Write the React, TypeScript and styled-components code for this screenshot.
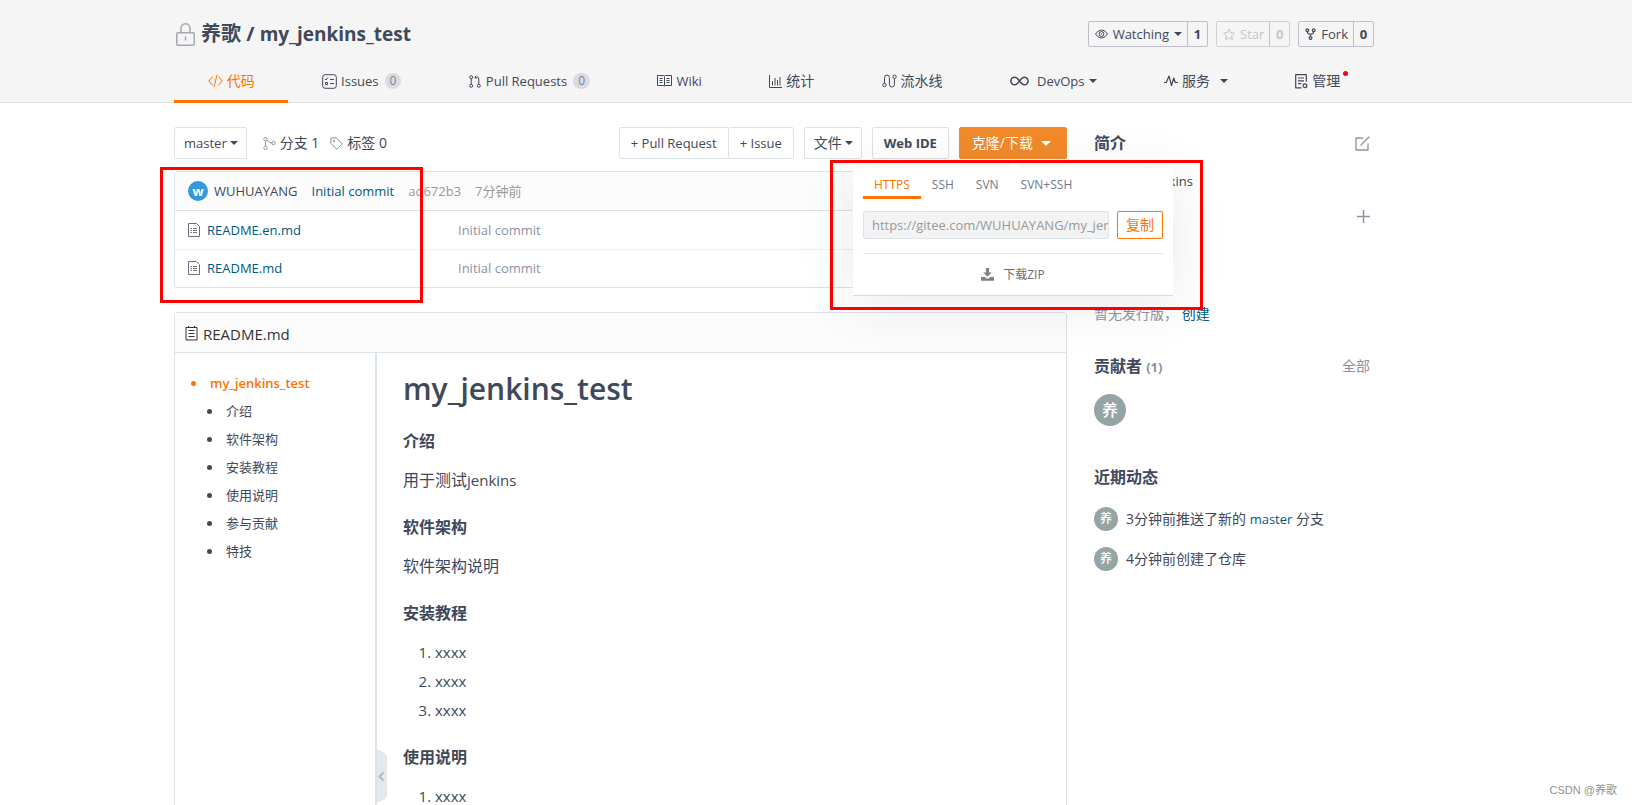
import React from 'react';
import styled, { createGlobalStyle, css } from 'styled-components';

const c = {
  text: '#40485b',
  link: '#005980',
  muted: '#8c92a4',
  faint: '#999999',
  line: '#dce3e8',
  orange: '#fe7300',
};

const Global = createGlobalStyle`
  *, *::before, *::after { box-sizing: border-box; }
  body {
    margin: 0;
    background: #fff;
    color: ${c.text};
    font: 14px/20px "Open Sans", "Noto Sans CJK SC", sans-serif;
  }
  a { color: inherit; text-decoration: none; }
  button, input { font: inherit; color: inherit; margin: 0; }
  button { cursor: pointer; }
  h1, h2, h3, h4, p, ul, ol { margin: 0; padding: 0; }
  svg { display: block; flex: none; }
`;

const Page = styled.div`
  height: 100vh;
  overflow: hidden;
  display: flex;
  flex-direction: column;
  position: relative;
`;

const Header = styled.header`
  background: #f5f5f5;
  border-bottom: 1px solid #dcdddd;
  padding-right: 84px;
`;

const Container = styled.div`
  max-width: 1200px;
  margin: 0 auto;
`;

const TitleRow = styled.div`
  display: flex;
  justify-content: space-between;
  align-items: center;
  padding-top: 20px;
  height: 48px;
`;

const Title = styled.h2`
  display: flex;
  align-items: center;
  gap: 6px;
  padding-left: 2px;
  font-size: 20px;
  line-height: 28px;
  font-weight: 700;
`;

const RepoName = styled.a`
  font-size: 19px;
`;

const Actions = styled.div`
  display: flex;
  gap: 8px;
`;

const Action = styled.div<{ $off?: boolean }>`
  display: flex;
  height: 26px;
  border: 1px solid ${p => (p.$off ? '#cfd0d6' : '#bcbecb')};
  border-radius: 2px;
  color: ${p => (p.$off ? '#c5c5c8' : c.text)};
  line-height: 24px;
`;

const ActionButton = styled.button`
  display: flex;
  align-items: center;
  gap: 5px;
  border: 0;
  padding: 0 5px 0 6px;
  background: none;
  font-size: 13px;
`;

const Count = styled.a`
  width: 20px;
  border-left: 1px solid #bcbecb;
  font-size: 13px;
  font-weight: 700;
  text-align: center;
`;

const Nav = styled.nav`
  display: flex;
  height: 55px;
  margin-bottom: -1px;
`;

const NavItem = styled.a<{ $on?: boolean }>`
  flex: 1 1 auto;
  display: flex;
  align-items: center;
  justify-content: center;
  gap: 4px;
  padding-top: 14px;
  border-bottom: 3px solid ${p => (p.$on ? c.orange : 'transparent')};
  color: ${p => (p.$on ? c.orange : c.text)};
  font-size: 14px;
  line-height: 20px;
`;

const NavLatin = styled.span<{ $spaced?: boolean }>`
  margin-left: ${p => (p.$spaced ? 4 : 0)}px;
  font-size: 13px;
`;

const NavCjk = styled.span`
  margin-right: 6px;
`;

const Pill = styled.span`
  height: 16px;
  padding: 0 5px;
  margin-left: 2px;
  border-radius: 8px;
  background: #dcdcde;
  color: #7480a5;
  font-size: 12px;
  line-height: 16px;
`;

const DotHost = styled.span`
  position: relative;
`;

const RedDot = styled.i`
  position: absolute;
  top: 0;
  right: -8px;
  width: 5px;
  height: 5px;
  border-radius: 50%;
  background: #f5001d;
`;

const Caret = styled.i<{ $size?: number }>`
  border: ${p => p.$size || 4}px solid transparent;
  border-top-color: currentColor;
  border-bottom: 0;
`;

const Body = styled.div`
  flex: 1;
  min-height: 0;
  display: flex;
  padding-right: 84px;
`;

const Columns = styled(Container)`
  position: relative;
  width: 100%;
  display: flex;
  gap: 27px;
  padding-top: 24px;
`;

const Main = styled.main`
  flex: 1;
  min-width: 0;
  display: flex;
  flex-direction: column;
`;

const Toolbar = styled.div`
  display: flex;
  align-items: center;
  height: 32px;
  margin-bottom: 12px;
`;

const boxButton = css`
  display: flex;
  align-items: center;
  justify-content: center;
  gap: 3px;
  height: 32px;
  border: 1px solid ${c.line};
  border-radius: 2px;
  background: #fff;
`;

const BoxButton = styled.button<{ $bold?: boolean; $cjk?: boolean; $menu?: boolean }>`
  ${boxButton}
  padding: ${p => (p.$menu ? '0 8px 0 9px' : '0 11px')};
  font-weight: ${p => (p.$bold ? 700 : 400)};
  font-size: ${p => (p.$cjk ? 14 : 13)}px;
`;

const CloneButton = styled.button`
  ${boxButton}
  gap: 8px;
  padding: 0 15px 0 12px;
  border-color: #f28a2b;
  background: #f28a2b;
  color: #fff;
  font-size: 14px;
`;

const Joined = styled.div`
  display: flex;
  & > * + * { margin-left: -1px; }
`;

const Refs = styled.div`
  display: flex;
  gap: 11px;
  margin-left: 16px;
  flex: 1;
`;

const Ref = styled.a`
  display: flex;
  align-items: center;
  gap: 4px;
  svg { color: ${c.muted}; }
`;

const Right = styled.div`
  display: flex;
  gap: 10px;
`;

const CloneWrap = styled.div`
  position: relative;
`;

const Popup = styled.div`
  position: absolute;
  z-index: 2;
  top: 41px;
  left: 50%;
  width: 320px;
  margin-left: -160px;
  padding: 0 10px;
  background: #fff;
  border-bottom: 1px solid #d8d9dc;
  box-shadow: 0 8px 56px rgba(30, 40, 70, 0.1);
  &::before {
    content: '';
    position: absolute;
    top: -6px;
    left: 50%;
    margin-left: -6px;
    border: 6px solid transparent;
    border-bottom-color: #fff;
    border-top: 0;
  }
`;

const Protocols = styled.div`
  display: flex;
  height: 31px;
`;

const Protocol = styled.button<{ $on?: boolean }>`
  border: 0;
  border-bottom: 3px solid ${p => (p.$on ? c.orange : 'transparent')};
  padding: 5px 11px 0;
  background: none;
  font-size: 12px;
  line-height: 20px;
  color: ${p => (p.$on ? c.orange : '#73798a')};
`;

const CopyRow = styled.div`
  display: flex;
  gap: 8px;
  padding: 12px 0 14px;
  border-bottom: 1px solid #e6e7ea;
`;

const UrlInput = styled.input`
  flex: 1;
  min-width: 0;
  height: 28px;
  padding: 0 0 0 8px;
  border: 1px solid ${c.line};
  border-radius: 2px;
  background: #f3f3f3;
  color: ${c.faint};
  font-size: 13px;
`;

const CopyButton = styled.button`
  width: 46px;
  height: 28px;
  padding: 0;
  border: 1px solid ${c.orange};
  border-radius: 2px;
  background: #fff;
  color: ${c.orange};
  font-size: 14px;
`;

const Zip = styled.a`
  display: flex;
  align-items: center;
  justify-content: center;
  gap: 9px;
  height: 41px;
  color: #6d6d70;
  font-size: 12px;
`;

const Card = styled.section<{ $grow?: boolean }>`
  flex: ${p => (p.$grow ? '1 0 auto' : 'none')};
  display: flex;
  flex-direction: column;
  border: 1px solid ${c.line};
  border-radius: 3px;
  & + & { margin-top: 24px; }
`;

const CommitBar = styled.div`
  display: flex;
  align-items: center;
  height: 39px;
  padding: 0 13px;
  border-bottom: 1px solid ${c.line};
  background: #fcfcfc;
  font-size: 13px;
  gap: 14px;
`;

const Author = styled.a`
  display: flex;
  align-items: center;
  gap: 6px;
`;

const Avatar = styled.span<{ $size: number; $blue?: boolean }>`
  flex: none;
  width: ${p => p.$size}px;
  height: ${p => p.$size}px;
  border-radius: 50%;
  background: ${p => (p.$blue ? '#3498db' : '#95a5a6')};
  color: #fff;
  font-size: ${p => (p.$blue ? 13 : p.$size / 2)}px;
  font-weight: ${p => (p.$blue ? 700 : 500)};
  line-height: ${p => p.$size}px;
  text-align: center;
`;

const Subject = styled.a`
  color: ${c.link};
`;

const Muted = styled.span`
  color: ${c.faint};
`;

const Files = styled.table`
  width: 100%;
  border-collapse: collapse;
  font-size: 13px;
  table-layout: fixed;
  tr + tr td { border-top: 1px solid #eef0f2; }
  td { height: 38px; padding: 0; color: ${c.muted}; }
  td:first-child { width: 283px; padding-left: 13px; }
`;

const FileLink = styled.a`
  display: flex;
  align-items: center;
  gap: 7px;
  color: ${c.link};
  svg { color: #6a7080; }
`;

const ReadmeHead = styled.div`
  display: flex;
  align-items: center;
  gap: 5px;
  height: 40px;
  padding: 2px 10px 0;
  border-bottom: 1px solid ${c.line};
  background: #fcfcfc;
  color: #333;
  font-size: 15px;
`;

const ReadmeBody = styled.div`
  flex: 1;
  display: flex;
`;

const Toc = styled.aside`
  position: relative;
  width: 202px;
  border-right: 2px solid ${c.line};
  padding: 16px;
  font-size: 13px;
  line-height: 28px;
`;

const TocList = styled.ul`
  list-style: none;
  ul { padding-left: 16px; }
`;

const TocLink = styled.a<{ $on?: boolean }>`
  display: flex;
  align-items: center;
  gap: 14px;
  color: ${p => (p.$on ? c.orange : c.text)};
  font-weight: ${p => (p.$on ? 600 : 400)};
  &::before {
    content: '';
    width: 5px;
    height: 5px;
    border-radius: 50%;
    background: currentColor;
  }
`;

const TocToggle = styled.button`
  position: absolute;
  top: 396px;
  right: -12px;
  width: 10px;
  height: 54px;
  padding: 0;
  border: 0;
  background: none;
`;

const Article = styled.article`
  flex: 1;
  padding: 14px 26px;
  font-size: 15px;
  h1 { font-size: 30px; line-height: 44px; font-weight: 600; margin-bottom: 18px; }
  h4 { font-size: 16px; line-height: 24px; font-weight: 700; margin-bottom: 13px; }
  p { font-size: 16px; line-height: 28px; margin-bottom: 21px; }
  p span { font-size: 15px; }
  ol { padding-left: 32px; margin-bottom: 20px; }
  li { line-height: 29px; }
`;

const Side = styled.aside`
  width: 280px;
  padding-right: 4px;
`;

const SideBlock = styled.section<{ $h?: number }>`
  min-height: ${p => p.$h || 0}px;
`;

const SideHead = styled.div`
  display: flex;
  align-items: center;
  justify-content: space-between;
  height: 32px;
  color: ${c.muted};
  h3 { color: ${c.text}; font-size: 16px; line-height: 24px; font-weight: 700; }
  small { color: ${c.muted}; font-size: 13px; }
`;

const About = styled.p`
  padding-top: 12px;
  margin-bottom: 19px;
  span { font-size: 13px; }
`;

const AddRow = styled.div`
  display: flex;
  justify-content: flex-end;
`;

const IconButton = styled.button`
  padding: 0;
  border: 0;
  background: none;
`;

const AddButton = styled(IconButton)`
  color: ${c.muted};
`;

const Release = styled.p`
  color: ${c.muted};
  a { color: ${c.link}; }
`;

const Contributors = styled.div`
  display: flex;
  padding-top: 12px;
`;

const Event = styled.li`
  display: flex;
  align-items: center;
  gap: 8px;
  height: 40px;
  a { color: ${c.link}; font-size: 13px; }
`;

const Events = styled.ul`
  list-style: none;
  padding-top: 6px;
`;

const Mark = styled.div<{ $x: number; $y: number; $w: number; $h: number }>`
  position: absolute;
  z-index: 3;
  left: ${p => p.$x}px;
  top: ${p => p.$y}px;
  width: ${p => p.$w}px;
  height: ${p => p.$h}px;
  border: 3px solid #f00;
  pointer-events: none;
`;

const Watermark = styled.div`
  position: absolute;
  right: 15px;
  bottom: 5px;
  color: #909090;
  font: 11px/20px "Liberation Sans", "Noto Sans CJK SC", sans-serif;
`;

type IconProps = { w?: number; h?: number; sw?: number; children: React.ReactNode };
const Icon = ({ w = 14, h = w, sw = 1, children }: IconProps) => (
  <svg width={w} height={h} viewBox={`0 0 ${w} ${h}`} fill="none" stroke="currentColor" strokeWidth={sw} strokeLinejoin="round" aria-hidden="true">
    {children}
  </svg>
);

const LockIcon = () => (
  <svg width="19" height="23" viewBox="0 0 19 23" fill="none" stroke="#a3a7b5" strokeWidth="1.500" aria-hidden="true">
    <rect x=".8" y="9.800" width="17.400" height="12.400" rx="1" />
    <path d="M5 9.800V5.300a4.500 4.500 0 0 1 9 0v4.500M9.500 13.500v4" />
  </svg>
);
const CodeIcon = () => <Icon w={15} h={14}><path d="M4.500 2.500L.8 7l3.700 4.500M10.500 2.500L14.200 7l-3.700 4.500M9 .8L6 13.200" /></Icon>;
const IssueIcon = () => (
  <Icon w={15} h={15}>
    <rect x=".7" y=".7" width="13.600" height="13.600" rx="2.500" />
    <path d="M3 5l1 1 2-2.500M8 5.500h4M8 9.500h4M3.500 8.500h2v2h-2z" />
  </Icon>
);
const PullIcon = () => (
  <Icon w={13} h={13}>
    <circle cx="2.200" cy="2.200" r="1.500" /><circle cx="2.200" cy="10.800" r="1.500" /><circle cx="9.800" cy="10.800" r="1.500" />
    <path d="M2.200 3.700v5.600M9.800 9.300V4q0-1.800-1.800-1.800H6M7.500.5L5.800 2.200l1.700 1.700" />
  </Icon>
);
const WikiIcon = () => (
  <Icon w={15} h={12}>
    <path d="M.5.500h6.300l.7.700.7-.7h6.300v10H8.200l-.7.700-.7-.7H.5zM7.500 1.500v9M2.500 3.500h3M2.500 5.500h3M2.500 7.500h3M9.500 3.500h3M9.500 5.500h3M9.500 7.500h3" />
  </Icon>
);
const ChartIcon = () => <Icon w={13} h={13}><path d="M.5 0v12.500H13M3.500 6v4.500M6 3v7.500M8.500 5v5.500M11 2v8.500" /></Icon>;
const FlowIcon = () => (
  <Icon w={15} h={14}>
    <circle cx="2.500" cy="11" r="1.700" /><circle cx="12.500" cy="2.800" r="1.700" />
    <path d="M2.500 9.300V3.500a2.400 2.400 0 0 1 4.900 0v7a2.500 2.500 0 0 0 5 0v-6" />
  </Icon>
);
const InfinityIcon = () => (
  <Icon w={19} h={10} sw={1.5}>
    <path d="M9.500 5C7.800 2.600 6.500 1.200 4.700 1.200a3.800 3.800 0 0 0 0 7.600C6.500 8.800 7.800 7.400 9.500 5s3-3.800 4.800-3.800a3.800 3.800 0 0 1 0 7.600C12.500 8.800 11.200 7.400 9.500 5z" />
  </Icon>
);
const PulseIcon = () => <Icon w={14} h={12} sw={1.2}><path d="M0 7.500h2.300L5 1l2.500 9.500L9.800 3l1.400 4.500H14" /></Icon>;
const ManageIcon = () => (
  <Icon w={13} h={15} sw={1.2}>
    <path d="M6.500 13.800H.7V.7h10.600v7M3 4h6M3 6.800h6M3 9.600h3.500" />
    <circle cx="10" cy="11.800" r="1.900" />
  </Icon>
);
const EyeIcon = () => (
  <Icon w={13} h={10}>
    <path d="M.5 5Q3 1 6.500 1t6 4q-2.500 4-6 4T.5 5z" /><circle cx="6.500" cy="5" r="2.400" /><circle cx="6.500" cy="5" r=".3" />
  </Icon>
);
const StarIcon = () => <Icon w={12} h={13}><path d="M6 1l1.600 3.600 3.800.5-2.800 2.700.8 3.900L6 9.800l-3.400 1.900.8-3.900L.6 5.100l3.800-.5z" /></Icon>;
const ForkIcon = () => (
  <Icon w={11} h={12} sw={1.2}>
    <circle cx="2.300" cy="2.300" r="1.400" /><circle cx="8.700" cy="2.300" r="1.400" /><circle cx="5.500" cy="10" r="1.400" />
    <path d="M2.300 3.700Q2.500 6 5.500 6.300 8.500 6 8.700 3.700M5.500 6.300v2.300" />
  </Icon>
);
const BranchIcon = () => (
  <Icon w={13} h={13}>
    <circle cx="2.500" cy="2.300" r="1.700" /><circle cx="2.500" cy="10.700" r="1.700" /><circle cx="10.500" cy="6" r="1.700" />
    <path d="M2.500 4v5M3.900 3.200Q6 5.800 8.800 6" />
  </Icon>
);
const TagIcon = () => (
  <Icon w={13} h={13}>
    <path d="M.8 1.200l5.400-.4 6 6.200-5.400 5.300L.8 6.300z" /><circle cx="4" cy="4" r=".8" />
  </Icon>
);
const FileIcon = () => (
  <Icon w={12} h={14}>
    <path d="M.5.500h8l3 3v10H.5zM5 5.500h4M5 7.500h4M5 9.500h4M2.500 5.500h1.500M2.500 7.500h1.500M2.500 9.500h1.500" />
  </Icon>
);
const ReadmeIcon = () => (
  <Icon w={13} h={15}>
    <path d="M1 1.500h11v12.500H1zM3.500 4.500h6M3.500 7.500h6M3.500 10.500h6" />
    <path d="M3.500 0v2M9.500 0v2" />
  </Icon>
);
const EditIcon = () => <Icon w={15} h={15} sw={1.3}><path d="M8 2H1v12h12V7.500M5.500 9.500L14.300.8" /></Icon>;
const PlusIcon = () => <Icon w={13} h={13} sw={1.5}><path d="M6.500 0v13M0 6.500h13" /></Icon>;
const DownloadIcon = () => (
  <svg width="13" height="13" viewBox="0 0 13 13" fill="#808083" aria-hidden="true">
    <path d="M5 0h3v4.500h2.800L6.500 8.800 2.200 4.500H5zM0 9h3.800l1.500 1.500h2.400L9.200 9H13v3.800H0z" />
  </svg>
);

const sections = ['介绍', '软件架构', '安装教程', '使用说明', '参与贡献', '特技'];
const files = ['README.en.md', 'README.md'];
const protocols = ['HTTPS', 'SSH', 'SVN', 'SVN+SSH'];

export default function App() {
  return (
    <Page>
      <Global />
      <Header>
        <Container>
          <TitleRow>
            <Title><LockIcon /><span>养歌 / <RepoName href="#repo">my_jenkins_test</RepoName></span></Title>
            <Actions>
              <Action>
                <ActionButton><EyeIcon />Watching<Caret /></ActionButton>
                <Count href="#watchers">1</Count>
              </Action>
              <Action $off>
                <ActionButton><StarIcon />Star</ActionButton>
                <Count href="#stars">0</Count>
              </Action>
              <Action>
                <ActionButton><ForkIcon />Fork</ActionButton>
                <Count href="#forks">0</Count>
              </Action>
            </Actions>
          </TitleRow>
          <Nav>
            <NavItem href="#code" $on><CodeIcon />代码</NavItem>
            <NavItem href="#issues"><IssueIcon /><NavLatin>Issues</NavLatin><Pill>0</Pill></NavItem>
            <NavItem href="#pulls"><PullIcon /><NavLatin>Pull Requests</NavLatin><Pill>0</Pill></NavItem>
            <NavItem href="#wiki"><WikiIcon /><NavLatin>Wiki</NavLatin></NavItem>
            <NavItem href="#stats"><ChartIcon />统计</NavItem>
            <NavItem href="#pipelines"><FlowIcon />流水线</NavItem>
            <NavItem href="#devops"><InfinityIcon /><NavLatin $spaced>DevOps</NavLatin><Caret /></NavItem>
            <NavItem href="#services"><PulseIcon /><NavCjk>服务</NavCjk><Caret /></NavItem>
            <NavItem href="#manage"><ManageIcon /><DotHost>管理<RedDot /></DotHost></NavItem>
          </Nav>
        </Container>
      </Header>
      <Body>
        <Columns>
          <Main>
            <Toolbar>
              <BoxButton $menu>master<Caret /></BoxButton>
              <Refs>
                <Ref href="#branches"><BranchIcon />分支 1</Ref>
                <Ref href="#tags"><TagIcon />标签 0</Ref>
              </Refs>
              <Right>
                <Joined>
                  <BoxButton>+ Pull Request</BoxButton>
                  <BoxButton>+ Issue</BoxButton>
                </Joined>
                <BoxButton $cjk $menu>文件<Caret /></BoxButton>
                <BoxButton $bold>Web IDE</BoxButton>
                <CloneWrap>
                  <CloneButton>克隆/下载<Caret $size={5} /></CloneButton>
                  <Popup>
                    <Protocols>
                      {protocols.map((p, i) => <Protocol key={p} $on={i === 0}>{p}</Protocol>)}
                    </Protocols>
                    <CopyRow>
                      <UrlInput aria-label="HTTPS" readOnly value="https://gitee.com/WUHUAYANG/my_jenkins_test.git" />
                      <CopyButton>复制</CopyButton>
                    </CopyRow>
                    <Zip href="#zip"><DownloadIcon />下载ZIP</Zip>
                  </Popup>
                </CloneWrap>
              </Right>
            </Toolbar>
            <Card>
              <CommitBar>
                <Author href="#author"><Avatar $size={20} $blue>w</Avatar>WUHUAYANG</Author>
                <Subject href="#commit">Initial commit</Subject>
                <Muted>ad672b3</Muted>
                <Muted>7分钟前</Muted>
              </CommitBar>
              <Files>
                <tbody>
                  {files.map(f => (
                    <tr key={f}>
                      <td><FileLink href={`#${f}`}><FileIcon />{f}</FileLink></td>
                      <td>Initial commit</td>
                    </tr>
                  ))}
                </tbody>
              </Files>
            </Card>
            <Card $grow>
              <ReadmeHead><ReadmeIcon />README.md</ReadmeHead>
              <ReadmeBody>
                <Toc>
                  <TocList>
                    <li>
                      <TocLink href="#top" $on>my_jenkins_test</TocLink>
                      <TocList>
                        {sections.map(s => <li key={s}><TocLink href={`#${s}`}>{s}</TocLink></li>)}
                      </TocList>
                    </li>
                  </TocList>
                  <TocToggle aria-label="收起">
                    <svg width="10" height="54" viewBox="0 0 10 54" aria-hidden="true">
                      <path d="M0 0L7 3.500Q10 5 10 8v38q0 3-3 4.500L0 54z" fill="#e3e8ec" />
                      <path d="M6.500 23.500L2.500 27.500l4 4" fill="none" stroke="#b4b9c4" strokeWidth="2" />
                    </svg>
                  </TocToggle>
                </Toc>
                <Article>
                  <h1>my_jenkins_test</h1>
                  <h4>介绍</h4>
                  <p>用于测试<span>jenkins</span></p>
                  <h4>软件架构</h4>
                  <p>软件架构说明</p>
                  <h4>安装教程</h4>
                  <ol><li>xxxx</li><li>xxxx</li><li>xxxx</li></ol>
                  <h4>使用说明</h4>
                  <ol><li>xxxx</li></ol>
                </Article>
              </ReadmeBody>
            </Card>
          </Main>
          <Side>
            <SideBlock $h={177}>
              <SideHead>
                <h3>简介</h3>
                <IconButton aria-label="编辑"><EditIcon /></IconButton>
              </SideHead>
              <About>用于测试<span>jenkins</span></About>
              <AddRow><AddButton aria-label="添加"><PlusIcon /></AddButton></AddRow>
            </SideBlock>
            <SideBlock $h={46}>
              <Release>暂无发行版， <a href="#release">创建</a></Release>
            </SideBlock>
            <SideBlock $h={111}>
              <SideHead>
                <h3>贡献者 <small>(1)</small></h3>
                <a href="#contributors">全部</a>
              </SideHead>
              <Contributors><Avatar $size={32}>养</Avatar></Contributors>
            </SideBlock>
            <SideBlock>
              <SideHead><h3>近期动态</h3></SideHead>
              <Events>
                <Event><Avatar $size={24}>养</Avatar><span>3分钟前推送了新的 <a href="#master">master</a> 分支</span></Event>
                <Event><Avatar $size={24}>养</Avatar><span>4分钟前创建了仓库</span></Event>
              </Events>
            </SideBlock>
          </Side>
          <Mark $x={-14} $y={64} $w={263} $h={136} />
          <Mark $x={656} $y={57} $w={373} $h={150} />
        </Columns>
      </Body>
      <Watermark>CSDN @养歌</Watermark>
    </Page>
  );
}
